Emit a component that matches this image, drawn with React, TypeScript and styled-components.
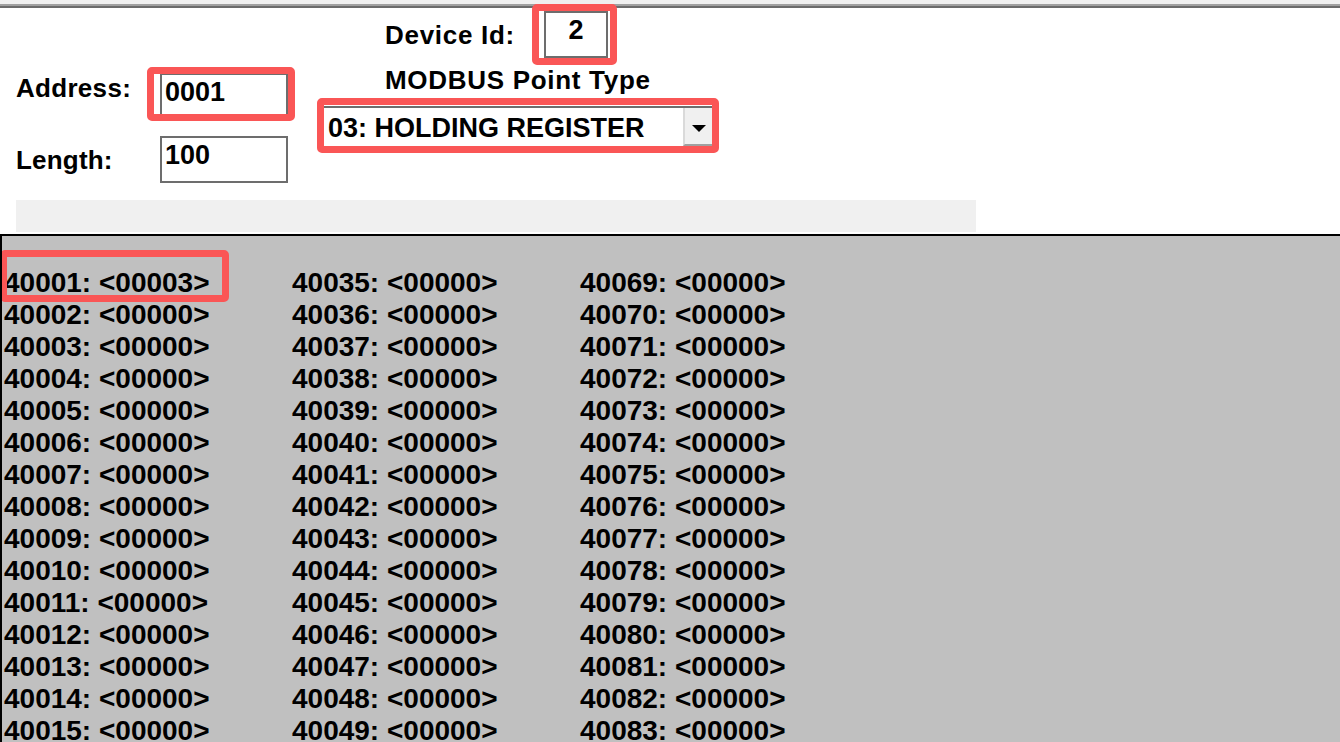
import React from "react";
import styled, { createGlobalStyle } from "styled-components";

const GlobalStyle = createGlobalStyle`
  html, body {
    margin: 0;
    padding: 0;
    background: #ffffff;
    overflow: hidden;
  }
  body {
    font-family: "Liberation Sans", Arial, sans-serif;
    color: #000000;
  }
  * { box-sizing: border-box; }
`;

const Window = styled.div`
  width: 1340px;
  height: 742px;
  display: flex;
  flex-direction: column;
  overflow: hidden;
  background: #ffffff;
`;

const TopEdge = styled.div`
  flex: none;
  height: 8px;
  background: linear-gradient(
    to bottom,
    #f0f0f0 0px,
    #f0f0f0 4px,
    #a0a0a0 4px,
    #a0a0a0 6px,
    #6b6b6b 6px,
    #6b6b6b 8px
  );
`;

const Form = styled.div`
  flex: none;
  height: 192px;
  display: flex;
  flex-direction: row;
`;

const LeftColumn = styled.div`
  width: 320px;
  padding: 65px 0 0 16px;
  display: flex;
  flex-direction: column;
  gap: 16px;
`;

const MiddleColumn = styled.div`
  padding-top: 3px;
  display: flex;
  flex-direction: column;
  align-items: flex-start;
`;

const FieldRow = styled.div<{ $align?: string; $indent?: number }>`
  display: flex;
  flex-direction: row;
  align-items: ${(p) => p.$align ?? "center"};
  margin-left: ${(p) => p.$indent ?? 0}px;
`;

const Label = styled.div<{ $width?: number; $shift?: number; $spacing?: number }>`
  width: ${(p) => (p.$width ? `${p.$width}px` : "auto")};
  margin-top: ${(p) => p.$shift ?? 0}px;
  font-size: 26px;
  font-weight: bold;
  line-height: 32px;
  letter-spacing: ${(p) => p.$spacing ?? 0}px;
  white-space: nowrap;
`;

const Anchor = styled.div`
  position: relative;
`;

const Field = styled.div<{ $width: number; $center?: boolean }>`
  width: ${(p) => p.$width}px;
  height: 47px;
  border: 2px solid #6d6d6d;
  background: #ffffff;
  padding: 1px 3px 0 3px;
  font-size: 27px;
  font-weight: bold;
  line-height: 32px;
  text-align: ${(p) => (p.$center ? "center" : "left")};
  white-space: nowrap;
`;

const ModbusLabel = styled(Label)`
  margin-left: 65px;
  margin-top: 6px;
`;

const Select = styled.div`
  margin-top: 10px;
  width: 396px;
  height: 44px;
  border-top: 2px solid #6d6d6d;
  border-left: 2px solid #6d6d6d;
  border-right: 2px solid #e3e3e3;
  border-bottom: 2px solid #e3e3e3;
  background: #ffffff;
  display: flex;
  flex-direction: row;
`;

const SelectValue = styled.div`
  flex: 1;
  padding: 4px 0 0 6px;
  font-size: 27px;
  font-weight: bold;
  line-height: 32px;
  white-space: nowrap;
`;

const SelectButton = styled.div`
  width: 29px;
  height: 38px;
  margin-right: 2px;
  background: #f0f0f0;
  border-left: 2px solid #dadada;
  border-bottom: 2px solid #a0a0a0;
  display: flex;
  align-items: center;
  justify-content: center;
  padding-top: 5px;
`;

const Highlight = styled.div<{ $l: number; $t: number; $w: number; $h: number }>`
  position: absolute;
  left: ${(p) => p.$l}px;
  top: ${(p) => p.$t}px;
  width: ${(p) => p.$w}px;
  height: ${(p) => p.$h}px;
  border: 7px solid #fa5656;
  border-radius: 5px;
  pointer-events: none;
  z-index: 2;
`;

const Strip = styled.div`
  flex: none;
  height: 32px;
  width: 960px;
  margin: 0 0 2px 16px;
  background: #f0f0f0;
`;

const DataPanel = styled.div`
  flex: 1;
  min-height: 0;
  background: #c0c0c0;
  border-top: 2px solid #000000;
  border-left: 2px solid #000000;
  padding: 31px 0 0 2px;
  overflow: hidden;
`;

const DataGrid = styled.div<{ $rows: number }>`
  display: grid;
  grid-template-rows: repeat(${(p) => p.$rows}, 32px);
  grid-auto-flow: column;
  grid-auto-columns: 288px;
`;

const DataCell = styled.div`
  position: relative;
  font-size: 28px;
  font-weight: bold;
  line-height: 32px;
  white-space: nowrap;
`;

const ROWS_PER_COLUMN = 34;
const LENGTH = 100;

const values: number[] = Array.from({ length: LENGTH }, (_, i) => (i === 0 ? 3 : 0));

const pad = (n: number, w: number) => String(n).padStart(w, "0");

export default function App() {
  return (
    <>
      <GlobalStyle />
      <Window>
        <TopEdge />
        <Form>
          <LeftColumn>
            <FieldRow $align="flex-start">
              <Label $width={144} $shift={-1} $spacing={0.3}>Address:</Label>
              <Anchor>
                <Field $width={128}>0001</Field>
                <Highlight $l={-13} $t={-6} $w={148} $h={54} />
              </Anchor>
            </FieldRow>
            <FieldRow>
              <Label $width={144} $spacing={0.2}>Length:</Label>
              <Field $width={128}>100</Field>
            </FieldRow>
          </LeftColumn>
          <MiddleColumn>
            <FieldRow $indent={65}>
              <Label $width={159} $spacing={0.7}>Device Id:</Label>
              <Anchor>
                <Field $width={64} $center>2</Field>
                <Highlight $l={-12} $t={-7} $w={85} $h={61} />
              </Anchor>
            </FieldRow>
            <ModbusLabel $spacing={0.7}>MODBUS Point Type</ModbusLabel>
            <Anchor>
              <Select>
                <SelectValue>03: HOLDING REGISTER</SelectValue>
                <SelectButton>
                  <svg width="14" height="7" viewBox="0 0 14 7">
                    <polygon points="0,0 14,0 7,7" fill="#000000" />
                  </svg>
                </SelectButton>
              </Select>
              <Highlight $l={-3} $t={2} $w={402} $h={55} />
            </Anchor>
          </MiddleColumn>
        </Form>
        <Strip />
        <DataPanel>
          <DataGrid $rows={ROWS_PER_COLUMN}>
            {values.map((v, i) => (
              <DataCell key={i}>
                {`${40001 + i}: <${pad(v, 5)}>`}
                {i === 0 && <Highlight $l={-4} $t={-17} $w={229} $h={52} />}
              </DataCell>
            ))}
          </DataGrid>
        </DataPanel>
      </Window>
    </>
  );
}
